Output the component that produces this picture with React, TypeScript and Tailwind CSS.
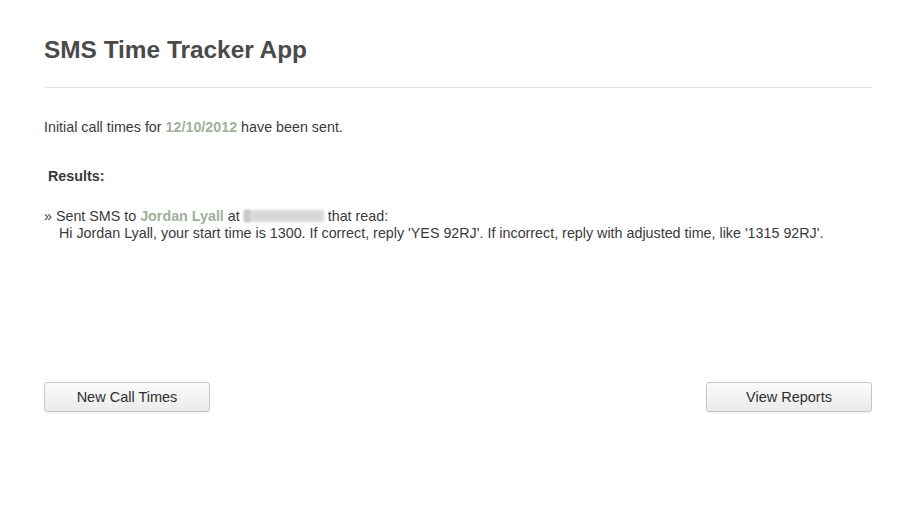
export default function App() {
  return (
    <div className="w-[921px] h-[515px] bg-white text-[#3a3a3a] overflow-hidden" style={{ fontFamily: '"Liberation Sans", Arial, sans-serif' }}>
      <div className="ml-[44px] w-[828px] pt-[35px]">
        <h1 className="text-[24.4px] leading-[30px] font-bold text-[#4a4a4a]">SMS Time Tracker App</h1>
        <div className="mt-[22px] h-px bg-[#e3e3e3] w-full" />
        <p className="mt-[30px] text-[14.3px] leading-[18px]">
          Initial call times for <span className="font-bold text-[#9fb09c]">12/10/2012</span> have been sent.
        </p>
        <p className="mt-[31px] ml-[4px] text-[14.3px] leading-[18px] font-bold">Results:</p>
        <div className="mt-[23px] text-[14.3px] leading-[17px]">
          <div>
            » Sent SMS to <span className="font-bold text-[#9fb09c]">Jordan Lyall</span> at{" "}
            <span className="relative inline-block w-[80px] h-[12px] align-[-1px]">
              <span className="absolute inset-0 bg-[#d6d9d6] blur-[1.5px]" />
              <span className="absolute left-0 top-0 h-full w-[6px] bg-[#c4c7c4] blur-[1px]" />
            </span>{" "}
            that read:
          </div>
          <div className="pl-[15px]">
            Hi Jordan Lyall, your start time is 1300. If correct, reply 'YES 92RJ'. If incorrect, reply with adjusted time, like '1315 92RJ'.
          </div>
        </div>
        <div className="mt-[140px] flex justify-between">
          <button className="w-[166px] h-[30px] pt-px rounded-[3px] border border-[#c6c6c6] bg-gradient-to-b from-[#fbfbfb] to-[#ebebeb] text-[14.5px] text-[#2e2e2e] shadow-[0_1px_1px_rgba(0,0,0,0.06)]">
            New Call Times
          </button>
          <button className="w-[166px] h-[30px] pt-px rounded-[3px] border border-[#c6c6c6] bg-gradient-to-b from-[#fbfbfb] to-[#ebebeb] text-[14.5px] text-[#2e2e2e] shadow-[0_1px_1px_rgba(0,0,0,0.06)]">
            View Reports
          </button>
        </div>
      </div>
    </div>
  );
}
